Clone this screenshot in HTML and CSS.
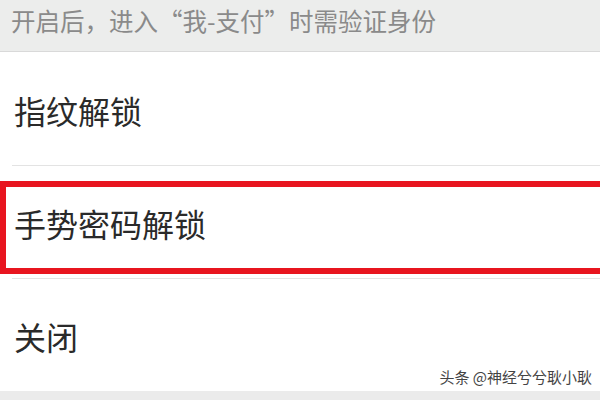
FILE: index.html
```html
<!DOCTYPE html>
<html lang="zh-CN">
<head>
    <meta charset="UTF-8">
    <meta name="viewport" content="width=device-width, initial-scale=1.0">
    <title>支付安全</title>
    <link rel="stylesheet" href="styles.css">
</head>
<body>

    <div class="tip">开启后，进入“我-支付”时需验证身份</div>

    <div class="list">
        <div class="item">指纹解锁</div>
        <div class="item">
            手势密码解锁
            <span class="mark"></span>
        </div>
        <div class="item">
            关闭
            <span class="watermark">头条 @神经兮兮耿小耿</span>
        </div>
    </div>

    <div class="footer"></div>

</body>
</html>
```

FILE: styles.css
```css
body {
    margin: 0;
    width: 600px;
    height: 400px;
    overflow: hidden;
    background: #fff;
    font-family: "Noto Sans CJK SC", "Noto Sans", sans-serif;
}
.tip {
    height: 52px;
    box-sizing: border-box;
    padding: 4px 0 0 11px;
    background: #ecedec;
    border-bottom: 1px solid #d9d9d9;
    color: #8a8a8a;
    font-size: 24.5px;
    line-height: 34px;
}
.list {
    display: flex;
    flex-direction: column;
}
.item {
    position: relative;
    height: 113px;
    box-sizing: border-box;
    padding: 3px 0 0 14px;
    display: flex;
    align-items: center;
    color: #2a2a2a;
    font-size: 32px;
}
.item + .item::before {
    content: "";
    position: absolute;
    top: 0;
    left: 12px;
    right: 0;
    border-top: 1px solid #e3e3e3;
}
.mark {
    position: absolute;
    top: 16px;
    bottom: 4px;
    left: 0;
    right: -10px;
    border: 6px solid #e8151f;
}
.watermark {
    position: absolute;
    right: 8px;
    bottom: 4px;
    font-size: 15px;
    line-height: 20px;
    color: #444;
    text-shadow: 0 0 1px #fff, 0 0 1px #fff;
    white-space: nowrap;
}
.footer {
    height: 9px;
    background: #ebebeb;
}
```
